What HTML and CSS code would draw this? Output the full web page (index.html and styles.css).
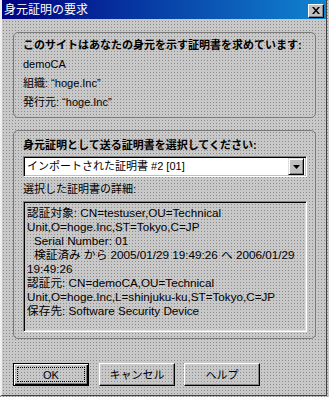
FILE: index.html
```html
<!DOCTYPE html>
<html lang="ja">
<head>
<meta charset="utf-8">
<title>身元証明の要求</title>
<link rel="stylesheet" href="styles.css">
</head>
<body>
<div class="window">
  <div class="titlebar">
    <span class="title">身元証明の要求</span>
    <span class="close"><svg width="8" height="7" viewBox="0 0 8 7"><path d="M0 0h2l2 2.5L6 0h2L5 3.5 8 7H6L4 4.5 2 7H0l3-3.5z" fill="#000"/></svg></span>
  </div>
  <div class="content">
    <div class="group g1">
      <div class="heading">このサイトはあなたの身元を示す証明書を求めています:</div>
      <div class="line">demoCA</div>
      <div class="line">組織: “hoge.Inc”</div>
      <div class="line">発行元: “hoge.Inc”</div>
    </div>
    <div class="group g2">
      <div class="heading">身元証明として送る証明書を選択してください:</div>
      <div class="select">
        <span class="sel-text">インポートされた証明書 #2 [01]</span>
        <span class="sel-btn"><svg width="7" height="4" viewBox="0 0 7 4"><path d="M0 0h7L3.5 4z" fill="#000"/></svg></span>
      </div>
      <div class="line label">選択した証明書の詳細:</div>
      <div class="details">
        <div>認証対象: CN=testuser,OU=Technical</div>
        <div>Unit,O=hoge.Inc,ST=Tokyo,C=JP</div>
        <div class="ind">Serial Number: 01</div>
        <div class="ind">検証済み から 2005/01/29 19:49:26 へ 2006/01/29</div>
        <div>19:49:26</div>
        <div>認証元: CN=demoCA,OU=Technical</div>
        <div>Unit,O=hoge.Inc,L=shinjuku-ku,ST=Tokyo,C=JP</div>
        <div>保存先: Software Security Device</div>
      </div>
    </div>
    <div class="buttons">
      <div class="btn default"><span class="focus">OK</span></div>
      <div class="btn">キャンセル</div>
      <div class="btn help">ヘルプ</div>
    </div>
  </div>
</div>
</body>
</html>
```
FILE: styles.css
```css
html, body {
  margin: 0;
  padding: 0;
}
body {
  width: 329px;
  height: 397px;
  overflow: hidden;
  font-family: "Liberation Sans", "Noto Sans CJK JP", sans-serif;
  font-size: 11px;
  color: #000;
  background-color: #c8c8c8;
  background-image: conic-gradient(from 270deg at 1px 1px, #8c8c8c 25%, transparent 0);
  background-size: 3px 3px;
}
.window {
  width: 327px;
  height: 396px;
  box-sizing: border-box;
  border-left: 2px solid #efefef;
  border-right: 1px solid #404040;
  border-bottom: 1px solid #404040;
  display: flex;
  flex-direction: column;
}
.titlebar {
  height: 19px;
  flex: none;
  display: flex;
  align-items: center;
  justify-content: space-between;
  padding: 0 2px 0 2px;
  background: linear-gradient(90deg, #000080 0%, #1084d0 100%);
  color: #fff;
}
.title {
  font-size: 12px;
  line-height: 19px;
  padding-top: 2px;
}
.close {
  width: 16px;
  height: 14px;
  box-sizing: border-box;
  display: flex;
  align-items: center;
  justify-content: center;
  background: #c0c0c0;
  border-top: 1px solid #fff;
  border-left: 1px solid #fff;
  border-right: 1px solid #000;
  border-bottom: 1px solid #000;
  box-shadow: inset -1px -1px 0 #808080;
  margin-top: 2px;
}
.content {
  flex: 1;
  display: flex;
  flex-direction: column;
  padding: 13px 10px 0 11px;
}
.group {
  border: 1px solid #7a7a7a;
  border-radius: 5px;
  box-sizing: border-box;
  padding: 0 8px 0 9px;
}
.g1 {
  height: 86px;
  padding-top: 3px;
}
.g2 {
  height: 209px;
  margin-top: 12px;
  padding-top: 5px;
}
.heading {
  font-weight: bold;
  line-height: 19px;
  white-space: nowrap;
}
.line {
  line-height: 19px;
  white-space: nowrap;
}
.select {
  margin-top: 1px;
  height: 21px;
  box-sizing: border-box;
  background: #fff;
  border-top: 1px solid #808080;
  border-left: 1px solid #808080;
  border-right: 1px solid #fff;
  border-bottom: 1px solid #fff;
  box-shadow: inset 1px 1px 0 #000, inset -1px -1px 0 #c0c0c0;
  display: flex;
  align-items: center;
  justify-content: space-between;
  padding: 2px 2px 2px 3px;
}
.sel-text {
  white-space: nowrap;
  line-height: 17px;
}
.sel-btn {
  width: 16px;
  height: 17px;
  box-sizing: border-box;
  background: #c0c0c0;
  border-top: 1px solid #dfdfdf;
  border-left: 1px solid #dfdfdf;
  border-right: 1px solid #000;
  border-bottom: 1px solid #000;
  box-shadow: inset 1px 1px 0 #fff, inset -1px -1px 0 #808080;
  display: flex;
  align-items: center;
  justify-content: center;
}
.label {
  margin-top: 3px;
}
.details {
  margin-top: 2px;
  height: 131px;
  box-sizing: border-box;
  border-top: 1px solid #808080;
  border-left: 1px solid #808080;
  border-right: 1px solid #fff;
  border-bottom: 1px solid #fff;
  box-shadow: inset 1px 1px 0 #000, inset -1px -1px 0 #dfdfdf;
  padding: 4px 2px 0 3px;
  font-size: 11.7px;
  line-height: 14px;
  white-space: nowrap;
  overflow: hidden;
}
.ind {
  padding-left: 7px;
}
.buttons {
  display: flex;
  margin-top: 24px;
  padding-left: 0;
}
.btn {
  width: 76px;
  height: 23px;
  box-sizing: border-box;
  margin-right: 10px;
  border-top: 1px solid #fff;
  border-left: 1px solid #fff;
  border-right: 1px solid #000;
  border-bottom: 1px solid #000;
  box-shadow: inset -1px -1px 0 #808080;
  display: flex;
  align-items: center;
  justify-content: center;
  line-height: 14px;
}
.btn.help {
  margin-left: -1px;
}
.btn.default {
  border: 1px solid #000;
  box-shadow: inset 1px 1px 0 #fff, inset -1px -1px 0 #000, inset -2px -2px 0 #808080;
  padding: 3px;
}
.focus {
  flex: 1;
  align-self: stretch;
  display: flex;
  align-items: center;
  justify-content: center;
  border: 1px dotted #000;
}
```
